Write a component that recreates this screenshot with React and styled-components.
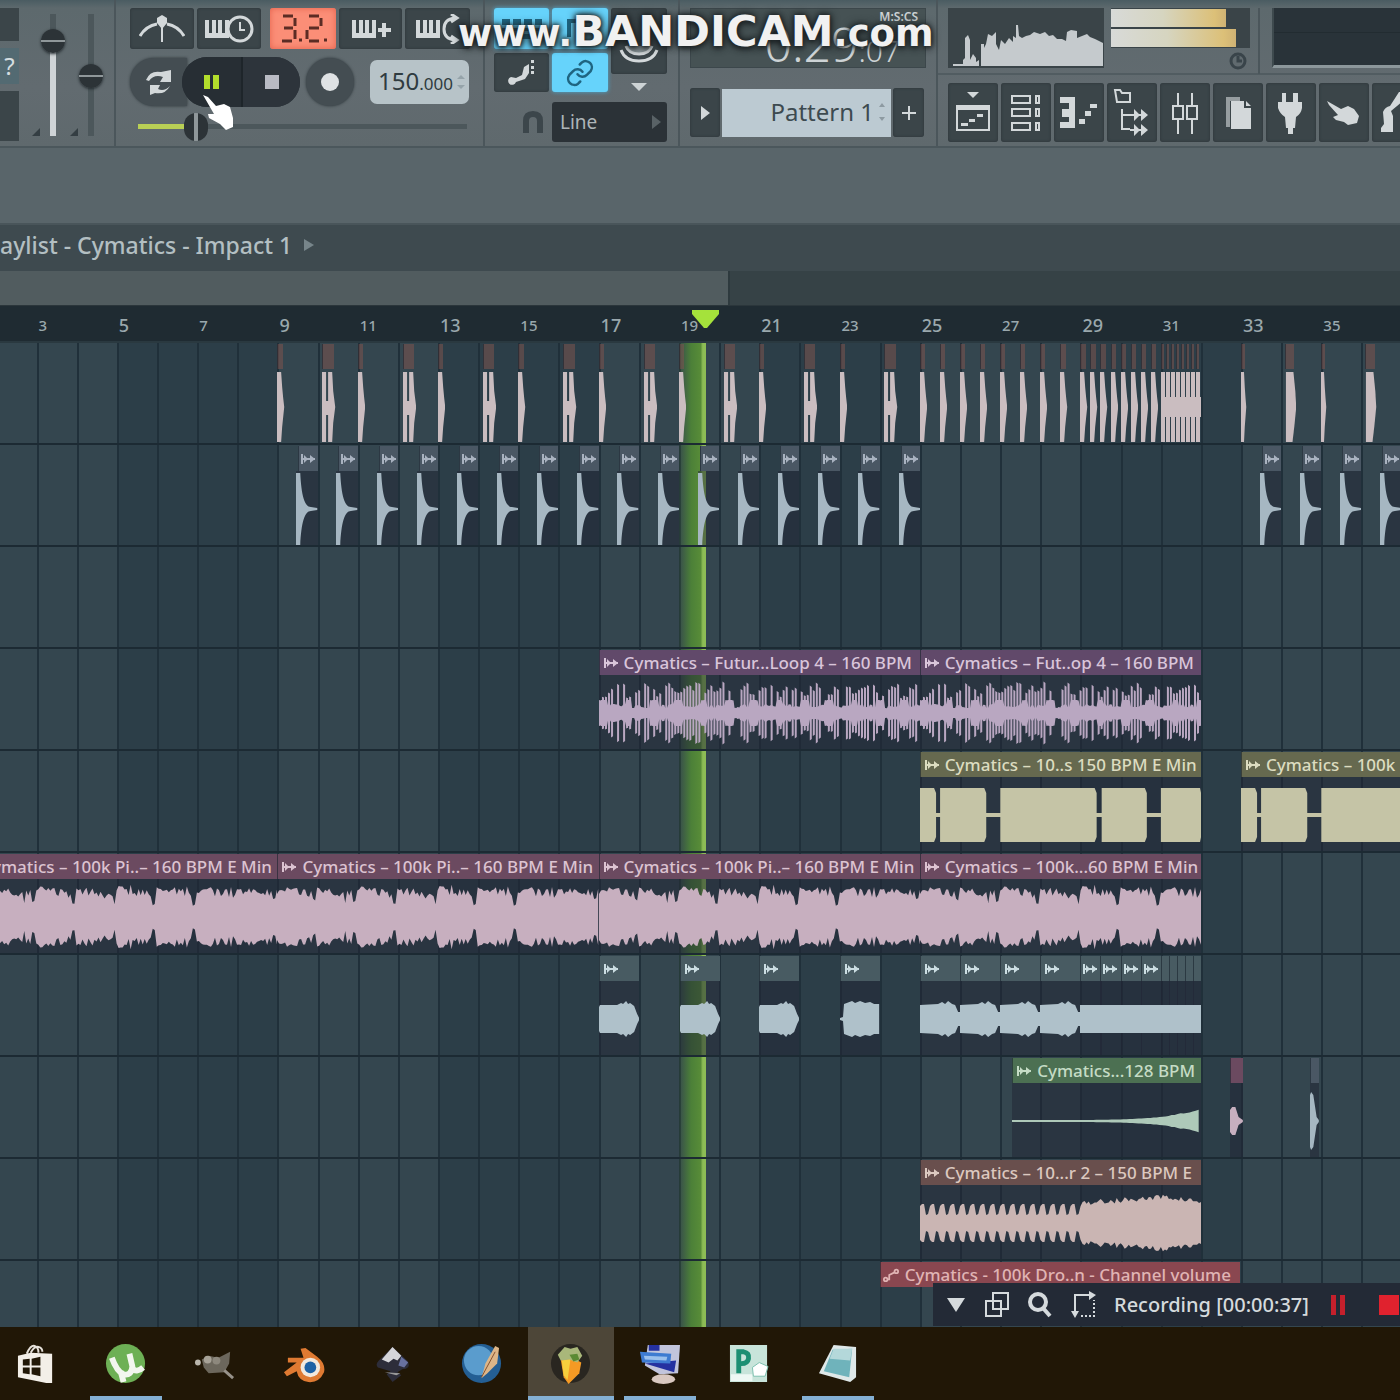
import styled, { createGlobalStyle, css } from "styled-components";

const GlobalStyle = createGlobalStyle`
    *{
        box-sizing: border-box;
    }
    body{
        margin: 0;
        background: #2e3f49;
        font-family: "Noto Sans", "Open Sans", sans-serif;
    }
    button, select, input{
        font-family: inherit;
        margin: 0;
        padding: 0;
        border: 0;
    }
    svg{
        display: block;
        flex: none;
    }
`;

/* ---------- timeline maths ---------- */

const FIRST_BAR = 2.09;
const VISIBLE_BARS = 34.87;
const BAR = 40;
const pct = (bar) => ((bar - FIRST_BAR) / VISIBLE_BARS) * 100 + "%";
const len = (bars) => (bars / VISIBLE_BARS) * 100 + "%";

/* ---------- page ---------- */

const Page = styled.div`
    display: flex;
    flex-direction: column;
    height: 100vh;
    overflow: hidden;
    position: relative;
`;

const Toolbar = styled.header`
    display: flex;
    flex: none;
    height: 148px;
    background: linear-gradient(#4a5c62 0, #5d696d 8px, #626b70 60%, #5f696d);
    border-bottom: 2px solid #4b575c;
    overflow: hidden;
`;

const Section = styled.div`
    flex: none;
    width: ${props => props.$width}px;
    padding: 8px 0 0 ${props => props.$pad || 0}px;
    border-right: 2px solid #4b565b;
    display: flex;
    flex-direction: column;
`;

const Row = styled.div`
    display: flex;
    align-items: ${props => props.$align || "center"};
    gap: ${props => props.$gap || 0}px;
    margin-top: ${props => props.$top || 0}px;
    padding-left: ${props => props.$indent || 0}px;
`;

const Column = styled.div`
    display: flex;
    flex-direction: column;
    align-items: center;
    gap: ${props => props.$gap || 0}px;
`;

const Spacer = styled.div`
    height: 75px;
    flex: none;
    background: #59656a;
`;

const ToolButton = styled.button`
    display: flex;
    align-items: center;
    justify-content: center;
    flex: none;
    width: ${props => props.$w}px;
    height: ${props => props.$h}px;
    border-radius: 3px;
    color: #d3d8da;
    background: #3b4549;
    box-shadow: inset 0 0 3px #2b3438;
    ${props => props.$blue && css`
        background: #66d3fb;
        color: #1f6581;
        box-shadow: 0 0 4px #4aa9d0;
    `}
    ${props => props.$red && css`
        background: #fb8e77;
        color: #5c2c24;
        box-shadow: inset 0 0 6px #e4604b;
    `}
`;

/* ---------- left edge ---------- */

const EdgeBox = styled.div`
    width: 19px;
    height: ${props => props.$h}px;
    background: ${props => props.$bg || "#3b4549"};
    color: #d5dde0;
    font-size: 24px;
    line-height: 36px;
    text-align: center;
`;

const VerticalRange = styled.input.attrs({ type: "range" })`
    appearance: none;
    writing-mode: vertical-lr;
    direction: rtl;
    width: 26px;
    height: 122px;
    background: transparent;
    &::-webkit-slider-runnable-track{
        width: 6px;
        background: ${props => props.$fill
            ? "linear-gradient(#4c575b 24%, #cfd4d7 24%)"
            : "#4c575b"};
    }
    &::-webkit-slider-thumb{
        appearance: none;
        width: 24px;
        height: 24px;
        margin-right: -9px;
        margin-left: -9px;
        border-radius: 50%;
        background: linear-gradient(#2c3337 45%, #8f979a 45%, #8f979a 55%, #2c3337 55%);
        box-shadow: 0 1px 3px #222a2e;
    }
`;

const PositionRange = styled.input.attrs({ type: "range" })`
    appearance: none;
    width: 329px;
    height: 28px;
    background: transparent;
    &::-webkit-slider-runnable-track{
        height: 5px;
        background: linear-gradient(90deg, #b9cf55 14%, #4c575b 14%);
    }
    &::-webkit-slider-thumb{
        appearance: none;
        width: 24px;
        height: 28px;
        margin-top: -11px;
        border-radius: 12px;
        background: linear-gradient(90deg, #2c3337 42%, #8f979a 42%, #8f979a 58%, #2c3337 58%);
    }
`;

/* ---------- transport ---------- */

const RoundButton = styled(ToolButton)`
    border-radius: 25px;
    background: #444d52;
    box-shadow: 0 0 3px #2b3438;
`;

const ModeButton = styled(ToolButton)`
    border-radius: 24px 0 0 24px;
    background: #444d52;
    box-shadow: 0 0 3px #2b3438;
    margin-right: -5px;
`;

const PlayGroup = styled.div`
    display: flex;
    border-radius: 25px;
    overflow: hidden;
    background: #272e34;
    margin-right: 6px;
    position: relative;
    button{
        border-radius: 0;
        background: #272e34;
        box-shadow: none;
    }
    button + button{
        background: #2d343b;
        border-left: 2px solid #1e252a;
    }
`;

const Tempo = styled.div`
    width: 99px;
    height: 44px;
    margin-left: 16px;
    border-radius: 7px;
    background: #b7c3c8;
    color: #2f3b40;
    display: flex;
    align-items: center;
    gap: 4px;
    padding-left: 8px;
    > div{
        font-size: 24px;
        line-height: 44px;
    }
    small{
        font-size: 17px;
    }
`;

const SnapSelect = styled.select`
    appearance: none;
    width: 115px;
    height: 40px;
    padding-left: 8px;
    border-radius: 3px;
    background: #2b3237;
    color: #aeb5b8;
    font-size: 19px;
`;

const SelectWrap = styled.label`
    position: relative;
    display: block;
    svg{
        position: absolute;
        right: 6px;
        top: 13px;
    }
`;

/* ---------- time and pattern ---------- */

const Lcd = styled.div`
    width: 236px;
    height: 60px;
    background: #465254;
    border: 1px solid #3c474b;
    color: #cdd3d5;
    display: flex;
    justify-content: flex-end;
    align-items: baseline;
    padding-right: 25px;
    font-size: 48px;
    line-height: 70px;
    font-weight: 300;
    position: relative;
    small{
        font-size: 30px;
    }
    span{
        position: absolute;
        right: 7px;
        top: 0;
        font-size: 12px;
        line-height: 16px;
        font-weight: 600;
    }
`;

const PatternName = styled.button`
    width: 169px;
    height: 48px;
    background: #bccad2;
    color: #3d4a50;
    font-size: 24px;
    display: flex;
    align-items: center;
    justify-content: flex-end;
    gap: 5px;
    padding-right: 6px;
    padding-bottom: 2px;
`;

/* ---------- monitors ---------- */

const RightPart = styled.div`
    flex: 1;
    min-width: 0;
    display: flex;
    flex-direction: column;
`;

const MonitorRow = styled.div`
    display: flex;
    align-items: flex-start;
    height: 75px;
    padding: 8px 0 0 10px;
    border-bottom: 2px solid #515c61;
`;

const Spectrum = styled.div`
    width: 156px;
    height: 60px;
    background: #3a4448;
    margin-right: 7px;
`;

const Meter = styled.div`
    width: 139px;
    height: 40px;
    padding-top: 1px;
    background: #3a4448;
    display: flex;
    flex-direction: column;
    gap: 2px;
`;

const MeterBar = styled.div`
    height: 18px;
    width: ${props => props.$level}%;
    background: linear-gradient(90deg, #d8dad8 0, #d6d5c0 45%, #dcc078 90%, #cfb274);
`;

const MonitorEnd = styled.div`
    width: 149px;
    display: flex;
    flex-direction: column;
    align-items: flex-start;
    height: 66px;
    border-right: 2px solid #4b565b;
    svg{
        margin: 4px 0 0 118px;
    }
`;

const DarkPanel = styled.div`
    flex: 1;
    height: 60px;
    margin-left: 12px;
    background: linear-gradient(#293339 42%, #222c31 42%, #222c31 44%, #293339 44%);
    border-bottom: 3px solid #8c979b;
    border-left: 2px solid #3e4a4e;
`;

const WindowButtons = styled.nav`
    display: flex;
    gap: 3px;
    padding: 8px 0 0 10px;
`;

/* ---------- playlist ---------- */

const TitleBar = styled.div`
    flex: none;
    height: 48px;
    background: #3e4a4f;
    border-top: 2px solid #49555a;
    color: #b3bfc2;
    font-size: 23px;
    line-height: 40px;
    font-weight: 500;
    display: flex;
    align-items: center;
    gap: 12px;
    padding-bottom: 6px;
    white-space: nowrap;
`;

const ScrollTrack = styled.div`
    flex: none;
    height: 35px;
    background: #364246;
    border-bottom: 1px solid #2b363b;
`;

const ScrollThumb = styled.div`
    width: 52%;
    height: 34px;
    background: #515c5f;
    border-right: 2px solid #2e3a3e;
    box-sizing: content-box;
`;

const Ruler = styled.div`
    flex: none;
    height: 37px;
    background: #1f2b32;
    border-bottom: 2px solid #2a3940;
    position: relative;
    overflow: hidden;
`;

const RulerMark = styled.span`
    position: absolute;
    bottom: 4px;
    color: #9aa8ad;
    font-size: ${props => props.$major ? 18 : 15}px;
    line-height: 24px;
    padding-left: 2px;
    font-weight: 500;
`;

const PlayheadMark = styled.svg`
    position: absolute;
    bottom: 12px;
    margin-left: -15px;
`;

const Tracks = styled.main`
    flex: 1;
    min-height: 0;
    overflow: hidden;
    position: relative;
    background: #2e3f49;
`;

const GridBar = styled.div`
    position: absolute;
    top: 0;
    bottom: 0;
    background: ${props => props.$light ? "#34464f" : "#2c3e48"};
    border-left: 2px solid #20303a;
`;

const Playhead = styled.div`
    position: absolute;
    top: 0;
    bottom: 0;
    width: 27px;
    margin-left: -27px;
    background: linear-gradient(90deg, rgba(75, 125, 50, 0.1), #4c8038 45%, #588c38 80%, #8dbc55 88%, #8dbc55);
`;

const Track = styled.div`
    height: 102px;
    position: relative;
    border-bottom: 2px solid #1c2a33;
`;

const themes = {
    kick: { head: "rgba(125, 84, 78, 0.55)", wave: "#cabdc0", text: "#ddd" },
    snare: { head: "#4a5764", wave: "#a6b7c2", text: "#a9b2c0" },
    purple: { head: "#61496a", wave: "#b9a7c1", text: "#d9c5da" },
    yellow: { head: "#66694f", wave: "#c5c4a6", text: "#dcdcc0" },
    pink: { head: "#6b4a60", wave: "#c7afbf", text: "#dcc3d1" },
    blue: { head: "#485b62", wave: "#afc1ca", text: "#cbdde2" },
    green: { head: "#4c7052", wave: "#aec9b9", text: "#c5dcc5" },
    brown: { head: "#694f4d", wave: "#cab5b3", text: "#dcc8bf" },
    red: { head: "#8a4750", wave: "#ccb6b4", text: "#e0b4b4" },
};

const ClipBox = styled.div`
    position: absolute;
    top: 1px;
    bottom: 0;
    display: flex;
    flex-direction: column;
    overflow: hidden;
    color: ${props => themes[props.$theme].text};
`;

const ClipHead = styled.div`
    flex: none;
    height: 25px;
    margin-left: ${props => props.$inset || 0}px;
    margin-right: ${props => props.$theme === "kick" ? 2 : 0}px;
    padding-left: ${props => props.$tight ? 2 : 4}px;
    background: ${props => themes[props.$theme].head};
    border-left: 1px solid rgba(25, 35, 45, 0.6);
    display: flex;
    align-items: center;
    gap: 6px;
    font-size: 17px;
    line-height: 24px;
    font-weight: 500;
    white-space: nowrap;
    overflow: hidden;
`;

const ClipBody = styled.div`
    flex: 1;
    padding-top: 2px;
    background: ${props => props.$clear ? "transparent" : "rgba(31, 36, 52, 0.5)"};
    svg{
        width: 100%;
        height: 72px;
        fill: ${props => themes[props.$theme].wave};
    }
`;

/* ---------- recording strip and taskbar ---------- */

const RecordingStrip = styled.div`
    position: absolute;
    right: 0;
    bottom: 1px;
    height: 43px;
    width: 467px;
    padding-left: 13px;
    background: #232a36;
    color: #d5dadd;
    display: flex;
    align-items: center;
    gap: 17px;
    font-size: 20px;
    font-weight: 500;
    white-space: nowrap;
    overflow: hidden;
    button{
        background: none;
        color: inherit;
        flex: none;
    }
`;

const Taskbar = styled.footer`
    flex: none;
    height: 73px;
    background: #211706;
    display: flex;
    gap: 3px;
    padding-left: 1px;
`;

const TaskButton = styled.button`
    flex: none;
    width: 86px;
    margin-left: ${props => props.$first ? -7 : 0}px;
    height: 73px;
    display: flex;
    flex-direction: column;
    align-items: center;
    justify-content: space-between;
    padding-top: 16px;
    background: ${props => props.$active ? "#4d4638" : "none"};
    &::after{
        content: "";
        width: ${props => props.$active ? 86 : 72}px;
        height: 4px;
        background: ${props => props.$open ? "#84b0d4" : "transparent"};
    }
`;

const Watermark = styled.div`
    position: absolute;
    left: 458px;
    top: 8px;
    display: flex;
    align-items: baseline;
    color: #f1f1f1;
    font-family: "DejaVu Sans", sans-serif;
    font-weight: 700;
    font-size: 37px;
    line-height: 46px;
    text-shadow: 0 0 4px #1c2224, 0 2px 6px #1c2224, 0 0 10px #1c2224;
    pointer-events: none;
    b{
        font-size: 43px;
    }
`;

const Cursor = styled.svg`
    position: absolute;
    left: 202px;
    top: 94px;
    pointer-events: none;
`;

/* ---------- wave forms ---------- */

function random(seed) {
    let s = seed;
    return () => {
        s = (s * 16807) % 2147483647;
        return s / 2147483647;
    };
}

function mirror(points) {
    const up = points.map(([x, a]) => `${x} ${(36 - a).toFixed(1)}`);
    const down = [...points].reverse().map(([x, a]) => `${x} ${(36 + a).toFixed(1)}`);
    return "M" + up.concat(down).join("L") + "Z";
}

const waves = {
    kick: () => "M0 1H4L5 16L6 27L7 36L6 46L5 56L4 71H0Z",
    kick2: () => "M0 1H4V71H0ZM6 1H10L11 20L13 36L11 52L10 71H6ZM4 30H7V44H4Z",
    fat: () => "M1 1H9L11 20L12 36L10 55L8 71H1Z",
    roll: () => "M0 1H4V26H5V46H4V71H0Z",
    snare: () => "M0 0H4C5 22 8 34 14 34L20 35V37L14 38C8 38 5 50 4 72H0Z",
    // thin spikes over a solid core, growing louder through each beat
    pluck: (w) => {
        const r = random(77);
        const pts = [];
        for (let x = 0; x < w; x += 3) {
            const beat = (x % 25) / 25;
            const core = beat < 0.3 ? 13 : 5 + r() * 4;
            const tall = 13 + beat * 14 + r() * 9;
            const spike = r() > 0.18 ? Math.max(tall, core) : core;
            pts.push([x, core], [x, spike], [x + 2, spike * 0.95], [x + 2, core]);
        }
        return mirror(pts);
    },
    piano: (w) => {
        const r = random(31);
        const pts = [];
        for (let x = 0; x <= w; x += 2) {
            const beat = x % 40;
            const dip = beat > 35 || (beat > 26 && beat < 30 && x % 80 > 40);
            const fade = 4 - beat / 8;
            pts.push([x, dip ? 11 + r() * 12 : 19 + fade + r() * 9 + (r() > 0.88 ? 3 : 0)]);
        }
        return mirror(pts);
    },
    blocks: (w) => {
        const blocks = [[0, 15], [20, 65], [80, 175], [181, 225], [240, 280], [283, 330]];
        const pieces = blocks.filter(b => b[0] < w).map(([a, b]) =>
            mirror([[a, 27], [Math.min(b - 1, w), 27], [Math.min(b + 1, w), 22]])
        );
        return pieces.join("") + `M0 34H${w}V38H0Z`;
    },
    blob: () => mirror([[0, 12], [1, 14], [18, 14], [22, 16], [24, 15], [27, 18], [29, 15], [31, 16], [35, 13], [38, 5], [40, 1]]),
    box: () => mirror([[0, 1], [3, 2], [4, 15], [12, 18], [15, 16], [20, 18], [25, 16], [30, 17], [34, 15], [39, 15]]),
    flatBlob: () => mirror([[0, 14], [18, 15], [22, 17], [25, 15], [28, 18], [32, 15], [35, 14], [38, 7], [40, 7]]),
    flat: () => mirror([[0, 14], [20, 14]]),
    riser: (w) => {
        const pts = [];
        const r = random(9);
        for (let x = 0; x <= w; x += 3) {
            const t = x / w;
            pts.push([x, 1 + Math.pow(t, 5) * 10 + (t > 0.8 ? r() : 0)]);
        }
        return mirror(pts);
    },
    pulses: (w) => {
        const r = random(5);
        const pts = [];
        for (let x = 0; x <= w; x += 2) {
            if (x < 160) {
                const p = x % 10;
                pts.push([x, p < 2 ? 17 : p < 6 ? 19 : p < 8 ? 8 : 9]);
            } else {
                const swell = x < 245 ? ((x - 160) / 85) * 6 : 6 - ((x - 245) / 35) * 5;
                pts.push([x, 17 + swell + r() * 6]);
            }
        }
        return mirror(pts);
    },
    hit: () => mirror([[0, 11], [2, 14], [5, 14], [8, 4], [12, 1]]),
    spike: () => mirror([[0, 26], [1, 29], [3, 26], [6, 4], [8, 1]]),
};

function Wave({ shape, width }) {
    return (
        <svg viewBox={`0 0 ${width} 72`} preserveAspectRatio="none" aria-hidden="true">
            <path d={waves[shape](width)} />
        </svg>
    );
}

/* ---------- clips ---------- */

const kickClips = [];
for (let bar = 9; bar < 25; bar += 2) {
    kickClips.push({ at: bar, bars: 0.18, shape: "kick", unit: 7 });
    kickClips.push({ at: bar + 1.12, bars: 0.33, shape: "kick2", unit: 13 });
}
for (let bar = 25; bar < 29; bar += 0.5) {
    kickClips.push({ at: bar, bars: 0.18, shape: "kick", unit: 7 });
}
for (let bar = 29; bar < 31; bar += 0.25) {
    kickClips.push({ at: bar, bars: 0.18, shape: "kick", unit: 7 });
}
for (let bar = 31; bar < 32; bar += 0.125) {
    kickClips.push({ at: bar, bars: 0.125, shape: "roll", unit: 5 });
}
kickClips.push({ at: 33, bars: 0.15, shape: "kick", unit: 8 });
kickClips.push({ at: 34.1, bars: 0.28, shape: "fat", unit: 12 });
kickClips.push({ at: 35, bars: 0.15, shape: "kick", unit: 8 });
kickClips.push({ at: 36.1, bars: 0.28, shape: "fat", unit: 12 });

const snareClips = [];
for (let bar = 9; bar < 37; bar++) {
    if (bar < 25 || bar > 32) {
        snareClips.push({ at: bar + 0.47, bars: 0.53, shape: "snare", unit: 20, icon: true, inset: 2 });
    }
}

const stabClips = [
    { at: 17, bars: 1, shape: "blob", icon: true },
    { at: 19.03, bars: 1, shape: "blob", icon: true },
    { at: 21, bars: 1, shape: "blob", icon: true },
    { at: 23, bars: 1, shape: "box", icon: true },
];
for (let bar = 25; bar < 29; bar++) {
    stabClips.push({ at: bar, bars: 1, shape: "flatBlob", icon: true });
}
for (let bar = 29; bar < 31; bar += 0.5) {
    stabClips.push({ at: bar, bars: 0.53, shape: "flat", unit: 20, icon: true });
}
for (let n = 0; n < 5; n++) {
    stabClips.push({ at: 31 + n * 0.2, bars: n < 4 ? 0.23 : 0.2, shape: "flat", unit: 20 });
}

const tracks = [
    { theme: "kick", clear: true, clips: kickClips },
    { theme: "snare", clips: snareClips },
    { theme: "snare", clips: [] },
    {
        theme: "purple",
        clips: [
            { at: 17, bars: 8, shape: "pluck", label: "Cymatics – Futur...Loop 4 – 160 BPM" },
            { at: 25, bars: 7, shape: "pluck", label: "Cymatics – Fut..op 4 – 160 BPM" },
        ],
    },
    {
        theme: "yellow",
        clips: [
            { at: 25, bars: 7, shape: "blocks", label: "Cymatics – 10..s 150 BPM E Min" },
            { at: 33, bars: 7, shape: "blocks", label: "Cymatics – 100k" },
        ],
    },
    {
        theme: "pink",
        clips: [
            { at: 1, bars: 8, shape: "piano", label: "Cymatics – 100k Pi..– 160 BPM E Min" },
            { at: 9, bars: 8, shape: "piano", label: "Cymatics – 100k Pi..– 160 BPM E Min" },
            { at: 17, bars: 8, shape: "piano", label: "Cymatics – 100k Pi..– 160 BPM E Min" },
            { at: 25, bars: 7, shape: "piano", label: "Cymatics – 100k...60 BPM E Min" },
        ],
    },
    { theme: "blue", clips: stabClips },
    {
        theme: "green",
        clips: [
            { at: 27.3, bars: 4.7, shape: "riser", label: "Cymatics...128 BPM" },
            { at: 32.72, bars: 0.32, shape: "hit", unit: 12, theme: "pink" },
            { at: 34.72, bars: 0.22, shape: "spike", unit: 8, theme: "snare" },
        ],
    },
    {
        theme: "brown",
        clips: [
            { at: 25, bars: 7, shape: "pulses", label: "Cymatics – 10...r 2 – 150 BPM E" },
        ],
    },
    {
        theme: "red",
        clips: [
            { at: 24, bars: 8.97, label: "Cymatics - 100k Dro..n - Channel volume", automation: true },
        ],
    },
];

function ClipIcon() {
    return (
        <svg width="14" height="12" viewBox="0 0 14 12" fill="currentColor" aria-hidden="true">
            <path d="M0 1H2V11H0ZM2 5H14V7H2ZM3 2L7 6L3 10ZM9 2L14 6L9 10Z" />
        </svg>
    );
}

function AutomationIcon() {
    return (
        <svg width="16" height="16" viewBox="0 0 18 16" fill="none" stroke="currentColor" strokeWidth="2" aria-hidden="true">
            <circle cx="3" cy="13" r="2" />
            <circle cx="15" cy="4" r="2" />
            <path d="M5 13H7V8L13 5" />
        </svg>
    );
}

function Clip({ clip, track }) {
    const theme = clip.theme || track.theme;
    return (
        <ClipBox $theme={theme} style={{ left: pct(clip.at), width: len(clip.bars) }}>
            <ClipHead $theme={theme} $inset={clip.inset} $tight={!clip.label && clip.bars < 1 || clip.automation}>
                {clip.automation && <AutomationIcon />}
                {(clip.icon || clip.label) && !clip.automation && <ClipIcon />}
                {clip.label && <span>{clip.label}</span>}
            </ClipHead>
            <ClipBody $theme={theme} $clear={track.clear || clip.automation}>
                {clip.shape && <Wave shape={clip.shape} width={clip.unit || clip.bars * BAR} />}
            </ClipBody>
        </ClipBox>
    );
}

/* ---------- icons ---------- */

const Keys = ({ extra, w = 46 }) => (
    <svg width={w} height="30" viewBox={`0 0 ${w} 30`} fill="currentColor" aria-hidden="true">
        <path d="M1 6H5V19H8V6H12V19H14V6H18V19H21V6H25V24H1Z" />
        {extra}
    </svg>
);

const MetronomeIcon = () => (
    <svg width="46" height="30" viewBox="0 0 46 30" fill="none" stroke="currentColor" strokeWidth="3" aria-hidden="true">
        <path d="M1 22Q7 12 18 10M28 10Q39 12 45 22" />
        <path d="M18 4L23 1L28 4V9L23 15L18 9Z" fill="currentColor" stroke="none" />
        <path d="M23 13V28" strokeWidth="2" />
    </svg>
);

const CountdownDigits = () => (
    <svg width="48" height="32" viewBox="0 0 48 32" fill="none" stroke="currentColor" strokeWidth="3" aria-hidden="true">
        <path d="M4 3H14M5 15H14M3 28H13M16 5V13M16 17V26M30 3H40M42 5V13M30 15H40M28 17V26M30 28H40" />
        <path d="M20 27H23M45 27H48" />
    </svg>
);

const windowIcons = {
    Playlist: (
        <>
            <path d="M14 0H26L20 6Z" />
            <path fill="none" stroke="currentColor" strokeWidth="2" d="M4 15H36V38H4Z" />
            <path d="M3 13H37V18H3ZM8 31H15V34H8ZM16 27H22V30H16ZM22 27H24V25H30V22H24V27Z" />
        </>
    ),
    "Channel rack": (
        <path fill="none" stroke="currentColor" strokeWidth="2" d="M6 4H24V11H6ZM6 17H24V24H6ZM6 31H24V38H6ZM30 4H33V11H30ZM30 17H33V24H30ZM30 31H33V38H30Z" />
    ),
    "Piano roll": (
        <path d="M1 5H16V36H1V30H10V25H3V17H10V11H1ZM20 27H26V32H20ZM26 19H32V24H26ZM31 12H38V16H31Z" />
    ),
    Browser: (
        <>
            <path fill="none" stroke="currentColor" strokeWidth="2" d="M3 -2H8L10 1H18V10H5ZM10 17V37H18M10 23H18" />
            <path d="M22 17L28 23L22 29ZM29 17L36 23L29 29ZM22 32L28 38L22 44ZM29 32L36 38L29 44ZM18 22H34V24H18ZM18 37H34V39H18Z" />
        </>
    ),
    Mixer: (
        <path fill="none" stroke="currentColor" strokeWidth="2" d="M13 1V13M27 1V13M8 14H18V27H8ZM22 14H32V27H22ZM13 28V42M27 28V42" />
    ),
    Project: (
        <>
            <path opacity="0.6" d="M8 5H22V9H12V35H8Z" />
            <path d="M13 9H26V16H33V37H13ZM28 9L33 14H28Z" />
        </>
    ),
    Plugins: (
        <path d="M11 1H15V10H22V1H27V10H31V16Q30 22 25 25L24 36H22V42H17V36H15L14 25Q9 22 7 16V10H11Z" />
    ),
    Touch: (
        <path d="M3 9L17 17L24 14L30 17L35 24L33 31L24 33L20 30L12 28L9 25L14 23L5 13Z" />
    ),
    Tools: (
        <>
            <path d="M22 0H36V9H26L14 19L16 24V40H4V36L7 32L6 20Q8 15 13 14Z" />
            <path fill="none" stroke="currentColor" strokeWidth="2" d="M36 18L24 24V34L36 40" />
        </>
    ),
};

const SpectrumDrawing = () => (
    <svg width="156" height="60" viewBox="0 0 156 60" fill="#c5cacd" aria-hidden="true">
        <path d="M5 58V56H15V52L17 50V30L20 27L22 32V52L25 46L28 50V54L31 52V58H33V36H36V40L38 36L40 26L44 28L48 24V36L51 42L53 32L57 36L61 30L65 34V28L68 30V17L70 17L71 28L74 30L78 28L82 27L86 24L92 26L97 24L101 28L105 27L109 31L114 31L118 33L119 24L123 22L129 23V30L134 28L139 26L142 29L147 31L151 33L155 35V58Z" />
    </svg>
);

const taskIcons = [
    {
        name: "Store",
        art: (
            <>
                <path fill="none" stroke="#e6e1da" strokeWidth="2" d="M10 10Q14 1 18 2T22 9M14 9Q18 2 22 3T26 8" />
                <path fill="#f3efe8" d="M1 12L14 9L36 10V40L30 40L1 34Z" />
                <path fill="#211706" d="M6 16L13 15V22H6ZM15 15L24 13V22H15ZM6 24H13V31L6 30ZM15 24H24V33L15 31Z" />
            </>
        ),
    },
    {
        name: "Torrent",
        open: true,
        art: (
            <>
                <circle cx="20" cy="20" r="20" fill="#6db055" />
                <path fill="none" stroke="#f2f6ee" strokeWidth="6" d="M6 14Q11 28 18 31Q26 33 27 23L24 10M27 25Q31 30 38 24M15 28L18 39" />
            </>
        ),
    },
    {
        name: "Gimp",
        art: (
            <>
                <path fill="#6c675c" d="M7 16L14 12L24 14L36 8L35 20L30 29L14 30L9 24Z" />
                <circle cx="3" cy="19" r="3" fill="#bab6ac" />
                <circle cx="13" cy="16" r="4" fill="#a7a297" />
                <circle cx="22" cy="17" r="4" fill="#8d887d" />
                <path stroke="#97928a" strokeWidth="3" d="M30 27L39 35" />
            </>
        ),
    },
    {
        name: "Blender",
        art: (
            <>
                <path fill="#df7a32" d="M0 29L13 19H4V14H20L17 5L22 4L34 13Q43 20 41 29Q36 40 25 39Q15 38 13 28L3 33Z" />
                <circle cx="27" cy="24" r="10" fill="#f2e9de" />
                <circle cx="27" cy="24" r="6" fill="#1e62a5" />
            </>
        ),
    },
    {
        name: "Inkscape",
        art: (
            <>
                <path fill="#2d2d3a" d="M20 3L36 18Q39 26 30 26L25 29L29 32L20 39L14 31L18 28L5 24Q2 21 6 17Z" />
                <path fill="#d5d5d9" d="M20 3L29 12L25 17L21 15L16 19L9 16Z" />
                <path fill="#6871a0" d="M29 13L36 19L32 24L26 22Z" />
                <path fill="#999" d="M12 29L28 30L24 32Z" />
            </>
        ),
    },
    {
        name: "Scribus",
        art: (
            <>
                <circle cx="20" cy="20" r="20" fill="#245f94" />
                <circle cx="17" cy="17" r="15" fill="#5a9ccd" />
                <path fill="#ddb688" d="M34 2L38 4L36 20L26 30L20 35L24 20Z" />
                <path stroke="#83502f" strokeWidth="1" d="M20 34L34 8" />
            </>
        ),
    },
    {
        name: "FL Studio",
        open: true,
        active: true,
        art: (
            <>
                <circle cx="20" cy="20" r="20" fill="#292620" />
                <path fill="#f59a24" d="M10 16Q18 11 31 19L29 30L18 41L13 34Z" />
                <path fill="#f7cf3d" d="M11 17L20 15L17 37L13 32Z" />
                <path fill="#a9b77a" d="M7 11L14 3L20 5L27 3L32 12L27 19L19 16L10 17Z" />
                <path fill="#5b8a34" d="M19 11L27 10L29 16L23 18Z" />
            </>
        ),
    },
    {
        name: "Remote desktop",
        open: true,
        art: (
            <>
                <path fill="#c2c5dc" d="M8 1H41L39 30L20 31L5 22Z" />
                <path fill="#2531a0" d="M9 1H20V7H9ZM5 20L37 17L35 29Z" />
                <path fill="#3e7bd1" d="M0 8L32 10L31 20L2 19Z" />
                <path fill="#9bc0ec" d="M4 12L28 13L27 17L5 16Z" />
                <ellipse cx="24" cy="36" rx="12" ry="5" fill="#d9c8c0" />
            </>
        ),
    },
    {
        name: "Publisher",
        art: (
            <>
                <path fill="#c8e4da" d="M1 1H39V39H1Z" />
                <path fill="none" stroke="#1d8f73" strokeWidth="5" d="M10 30V8H15Q21 9 20 15T10 20" />
                <path fill="#eef8f4" d="M2 31H24V38H2Z" />
                <path fill="#fff" stroke="#7cbfae" d="M24 24L31 19L40 23L37 33L25 33Z" />
            </>
        ),
    },
    {
        name: "Notepad",
        open: true,
        art: (
            <>
                <path fill="#dfe8e8" d="M16 1L39 3V34L33 39L1 30Z" />
                <path fill="#6fb3bb" d="M15 6L35 5L32 34L6 28Z" />
                <path fill="#b4d8da" d="M16 5L35 5L33 17L12 15Z" />
            </>
        ),
    },
];

/* ---------- parts ---------- */

const CornerMark = () => (
    <svg width="8" height="8" viewBox="0 0 8 8" fill="#343e43" aria-hidden="true"><path d="M8 0V8H0Z" /></svg>
);

function Levels() {
    return (
        <Section $width={116}>
            <Row $gap={13} $align="flex-start">
                <Column $gap={7}>
                    <EdgeBox $h={33} />
                    <EdgeBox $h={36} $bg="#536a72">?</EdgeBox>
                    <EdgeBox $h={50} />
                </Column>
                <Row $top={6} $align="flex-end">
                    <CornerMark />
                    <VerticalRange $fill min="0" max="100" defaultValue="85" aria-label="Volume" />
                    <Row $indent={4}>
                        <CornerMark />
                    </Row>
                    <VerticalRange min="0" max="100" defaultValue="49" aria-label="Pitch" />
                </Row>
            </Row>
        </Section>
    );
}

function Transport() {
    return (
        <Section $width={369} $pad={14}>
            <Row $gap={9}>
                <Row $gap={3}>
                    <ToolButton $w={64} $h={41} aria-label="Metronome"><MetronomeIcon /></ToolButton>
                    <ToolButton $w={64} $h={41} aria-label="Wait for input">
                        <Keys w={50} extra={<g fill="#3b4549" stroke="currentColor" strokeWidth="3"><circle cx="36" cy="15" r="12" /><path d="M36 8V16H41" fill="none" strokeWidth="2" /></g>} />
                    </ToolButton>
                </Row>
                <Row $gap={3}>
                    <ToolButton $w={66} $h={41} $red aria-label="Countdown"><CountdownDigits /></ToolButton>
                    <ToolButton $w={63} $h={41} aria-label="Overdub">
                        <Keys w={40} extra={<path d="M31 9H35V14H40V18H35V23H31V18H27V14H31Z" />} />
                    </ToolButton>
                    <ToolButton $w={65} $h={41} aria-label="Loop record">
                        <Keys w={46} extra={<path fill="none" stroke="currentColor" strokeWidth="3" d="M40 4Q29 5 29 15T40 26M36 0L42 4L36 8M36 22L42 26L36 30" />} />
                    </ToolButton>
                </Row>
            </Row>
            <Row $top={8}>
                <ModeButton $w={57} $h={48} aria-label="Song mode">
                    <svg width="28" height="28" viewBox="0 0 28 28" fill="currentColor" aria-hidden="true">
                        <path d="M1 12Q5 2 16 4L26 2V14H15L18 9Q9 6 4 13ZM5 17H15L13 21Q19 24 25 18Q20 27 10 25L5 27Z" />
                    </svg>
                </ModeButton>
                <PlayGroup>
                    <ToolButton $w={59} $h={50} aria-label="Pause">
                        <svg width="16" height="14" viewBox="0 0 16 14" fill="#b3de2c" aria-hidden="true"><path d="M0 0H6V14H0ZM9 0H15V14H9Z" /></svg>
                    </ToolButton>
                    <ToolButton $w={59} $h={50} aria-label="Stop">
                        <svg width="14" height="14" viewBox="0 0 14 14" fill="#b9bbc4" aria-hidden="true"><path d="M0 0H14V14H0Z" /></svg>
                    </ToolButton>
                </PlayGroup>
                <RoundButton $w={48} $h={48} aria-label="Record">
                    <svg width="18" height="18" viewBox="0 0 18 18" fill="#dfe2e4" aria-hidden="true"><circle cx="9" cy="9" r="9" /></svg>
                </RoundButton>
                <Tempo>
                    <div>150<small>.000</small></div>
                    <svg width="8" height="16" viewBox="0 0 8 16" fill="#95a3a9" aria-hidden="true"><path d="M0 5L4 1L8 5ZM0 11L4 15L8 11Z" /></svg>
                </Tempo>
            </Row>
            <Row $top={5} $indent={8}>
                <PositionRange min="0" max="100" defaultValue="15" aria-label="Song position" />
            </Row>
        </Section>
    );
}

function SnapPanel() {
    return (
        <Section $width={195} $pad={9}>
            <Row $gap={3} $align="flex-start">
                <Column $gap={4}>
                    <ToolButton $w={55} $h={41} $blue aria-label="Typing keyboard">
                        <svg width="44" height="24" viewBox="0 0 44 24" fill="currentColor" aria-hidden="true"><path d="M2 2H10V8H2ZM13 2H21V8H13ZM24 2H32V8H24ZM35 2H42V8H35ZM2 11H42V14H2ZM6 17H38V22H6Z" /></svg>
                    </ToolButton>
                    <ToolButton $w={55} $h={39} aria-label="Note glide">
                        <svg width="32" height="28" viewBox="0 0 32 28" fill="currentColor" aria-hidden="true"><path d="M5 18L10 19L16 16L18 8L23 5L23 14L19 20L10 23A4 4 0 1 1 5 18ZM25 1H28V4H25ZM25 7H28V10H25ZM25 12H28V15H25Z" /></svg>
                    </ToolButton>
                </Column>
                <Column $gap={4}>
                    <ToolButton $w={56} $h={41} $blue aria-label="Auto scroll">
                        <svg width="30" height="24" viewBox="0 0 30 24" fill="currentColor" aria-hidden="true"><path d="M2 2H26V6H6V20H2Z" /></svg>
                    </ToolButton>
                    <ToolButton $w={56} $h={39} $blue aria-label="Link">
                        <svg width="30" height="30" viewBox="0 0 24 24" fill="none" stroke="currentColor" strokeWidth="2" strokeLinecap="round" aria-hidden="true">
                            <path d="M10 13a5 5 0 0 0 7.5.5l3-3a5 5 0 0 0-7-7l-1.700 1.700" />
                            <path d="M14 11a5 5 0 0 0-7.500-.500l-3 3a5 5 0 0 0 7 7l1.700-1.700" />
                        </svg>
                    </ToolButton>
                </Column>
                <Column $gap={9}>
                    <ToolButton $w={56} $h={66} aria-label="Multilink">
                        <svg width="44" height="50" viewBox="0 0 44 50" fill="none" stroke="currentColor" strokeWidth="3" aria-hidden="true"><path d="M4 34Q8 45 22 45T40 34" /><path d="M9 30Q12 38 22 38T35 30" fill="#8d989b" /></svg>
                    </ToolButton>
                    <svg width="16" height="8" viewBox="0 0 16 8" fill="#cdd3d5" aria-hidden="true"><path d="M0 0H16L8 8Z" /></svg>
                </Column>
            </Row>
            <Row $top={10} $gap={7} $indent={28}>
                <svg width="23" height="24" viewBox="0 0 23 24" fill="none" stroke="#3c464b" strokeWidth="6" aria-hidden="true"><path d="M4 23V11Q4 4 11 4T18 11V23" /></svg>
                <SelectWrap>
                    <SnapSelect aria-label="Snap"><option>Line</option></SnapSelect>
                    <svg width="9" height="14" viewBox="0 0 9 14" fill="#596266" aria-hidden="true"><path d="M0 0L9 7L0 14Z" /></svg>
                </SelectWrap>
            </Row>
        </Section>
    );
}

function TimePanel() {
    return (
        <Section $width={258} $pad={10}>
            <Lcd>0:29<small>:07</small><span>M:S:CS</span></Lcd>
            <Row $top={20} $gap={2}>
                <ToolButton $w={30} $h={49} aria-label="Pattern menu">
                    <svg width="9" height="14" viewBox="0 0 9 14" fill="currentColor" aria-hidden="true"><path d="M0 0L9 7L0 14Z" /></svg>
                </ToolButton>
                <PatternName>
                    Pattern 1
                    <svg width="6" height="18" viewBox="0 0 6 18" fill="#8d9aa1" aria-hidden="true"><path d="M0 4L3 0L6 4ZM0 14L3 18L6 14Z" /></svg>
                </PatternName>
                <ToolButton $w={31} $h={49} aria-label="Add pattern">
                    <svg width="14" height="14" viewBox="0 0 14 14" fill="currentColor" aria-hidden="true"><path d="M6 0H8V6H14V8H8V14H6V8H0V6H6Z" /></svg>
                </ToolButton>
            </Row>
        </Section>
    );
}

function Monitors() {
    return (
        <RightPart>
            <MonitorRow>
                <Spectrum><SpectrumDrawing /></Spectrum>
                <MonitorEnd>
                    <Meter>
                        <MeterBar $level={83} />
                        <MeterBar $level={90} />
                    </Meter>
                    <svg width="18" height="18" viewBox="0 0 18 18" fill="none" stroke="#39444a" strokeWidth="3" aria-hidden="true"><circle cx="9" cy="9" r="7" /><path d="M9 4V9H13" /></svg>
                </MonitorEnd>
                <DarkPanel />
            </MonitorRow>
            <WindowButtons>
                {Object.entries(windowIcons).map(([name, art]) => (
                    <ToolButton key={name} $w={50} $h={59} aria-label={name}>
                        <svg width="40" height="48" viewBox="0 -3 40 48" fill="currentColor" aria-hidden="true">{art}</svg>
                    </ToolButton>
                ))}
            </WindowButtons>
        </RightPart>
    );
}

function Recording() {
    return (
        <RecordingStrip>
            <button aria-label="More">
                <svg width="20" height="14" viewBox="0 0 20 14" fill="currentColor"><path d="M1 0H19L10 14Z" /></svg>
            </button>
            <button aria-label="Windows">
                <svg width="27" height="26" viewBox="0 0 27 26" fill="none" stroke="currentColor" strokeWidth="2"><path d="M10 1H25V17H10ZM3 9H18V24H3Z" /></svg>
            </button>
            <button aria-label="Zoom">
                <svg width="25" height="26" viewBox="0 0 25 26" fill="none" stroke="currentColor" strokeWidth="4"><circle cx="11" cy="10" r="8" /><path d="M16 16L23 24" /></svg>
            </button>
            <button aria-label="Select area">
                <svg width="28" height="28" viewBox="0 0 28 28" fill="none" stroke="currentColor" strokeWidth="2"><path d="M6 22V4H22" /><path d="M12 25H25V9" strokeDasharray="2 2" /><path fill="currentColor" stroke="none" d="M2 20H10L6 27ZM20 0L27 4L20 9Z" /></svg>
            </button>
            <span>Recording [00:00:37]</span>
            <button aria-label="Pause recording">
                <svg width="28" height="22" viewBox="0 0 28 22" fill="#c5202c"><path d="M5 1H10V21H5ZM14 1H19V21H14Z" /></svg>
            </button>
            <button aria-label="Stop recording">
                <svg width="30" height="22" viewBox="0 0 30 22" fill="#e0222e"><path d="M8 1H28V21H8Z" /></svg>
            </button>
        </RecordingStrip>
    );
}

function Playlist() {
    const bars = [];
    for (let bar = 2; bar < 38; bar++) bars.push(bar);
    return (
        <>
            <TitleBar>
                aylist - Cymatics - Impact 1
                <svg width="10" height="12" viewBox="0 0 10 12" fill="#77858a" aria-hidden="true"><path d="M0 0L10 6L0 12Z" /></svg>
            </TitleBar>
            <ScrollTrack><ScrollThumb /></ScrollTrack>
            <Ruler>
                {bars.filter(bar => bar % 2 === 1 && bar < 37).map(bar => (
                    <RulerMark key={bar} $major={bar % 4 === 1} style={{ left: pct(bar) }}>{bar}</RulerMark>
                ))}
                <PlayheadMark style={{ left: pct(19.67) }} width="29" height="19" viewBox="0 0 29 19" fill="#a5e23b"><path d="M1 0H28V4L16 18H13L1 4Z" /></PlayheadMark>
            </Ruler>
            <Tracks>
                {bars.map(bar => (
                    <GridBar key={bar} $light={Math.floor((bar - 1) / 4) % 2 === 0} style={{ left: pct(bar), width: len(1) }} />
                ))}
                <Playhead style={{ left: pct(19.67) }} />
                {tracks.map((track, i) => (
                    <Track key={i}>
                        {track.clips.map((clip, n) => <Clip key={n} clip={clip} track={track} />)}
                    </Track>
                ))}
                <Recording />
            </Tracks>
        </>
    );
}

export default function App() {
    return (
        <Page>
            <GlobalStyle />
            <Toolbar>
                <Levels />
                <Transport />
                <SnapPanel />
                <TimePanel />
                <Monitors />
            </Toolbar>
            <Spacer />
            <Playlist />
            <Taskbar>
                {taskIcons.map((task, i) => (
                    <TaskButton key={task.name} $first={i === 0} $open={task.open} $active={task.active} aria-label={task.name}>
                        <svg width="42" height="42" viewBox="-1 -1 43 43">{task.art}</svg>
                    </TaskButton>
                ))}
            </Taskbar>
            <Watermark>www.<b>BANDICAM</b>.com</Watermark>
            <Cursor width="34" height="38" viewBox="0 0 34 38" fill="#fff" aria-hidden="true">
                <path d="M1 1L6 3L14 12L22 10L28 13L31 24V33L24 36L18 30L7 24L6 20L12 20Z" />
            </Cursor>
        </Page>
    );
}
